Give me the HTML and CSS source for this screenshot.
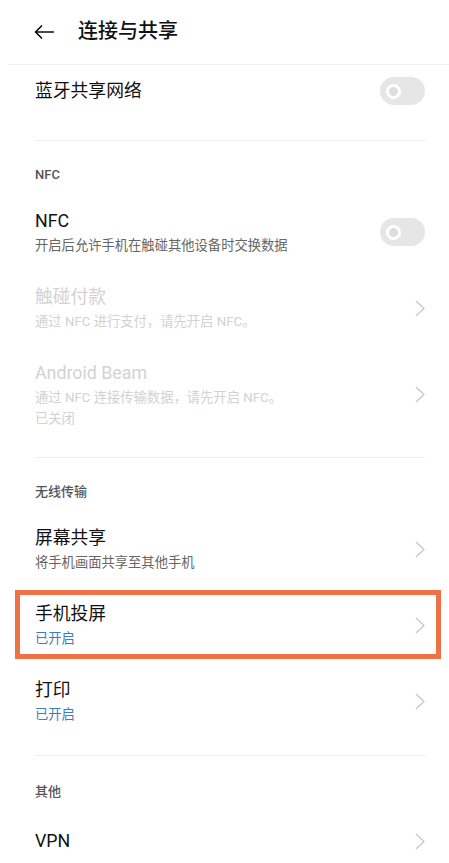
FILE: index.html
```html
<!DOCTYPE html>
<html lang="zh-CN">
<head>
  <meta charset="UTF-8" />
  <title>连接与共享</title>
  <link rel="stylesheet" href="styles.css">
</head>
<body>

  <!-- 顶部标题栏 -->
  <div class="top-bar">
    <svg class="back-icon" width="20" height="14" viewBox="0 0 20 14">
      <path d="M19.5 7H1.5M7.5 1L1.5 7l6 6" fill="none" stroke="#111" stroke-width="1.7" stroke-linecap="round" stroke-linejoin="round"/>
    </svg>
    <h1 class="page-title">连接与共享</h1>
  </div>

  <div class="settings">
    <div class="group first-group">
      <div class="item single">
        <div class="item-text">
          <div class="item-title">蓝牙共享网络</div>
        </div>
        <div class="switch"><span class="knob"></span></div>
      </div>
    </div>

    <div class="group">
      <div class="group-label">NFC</div>
      <div class="item">
        <div class="item-text">
          <div class="item-title">NFC</div>
          <div class="item-sub">开启后允许手机在触碰其他设备时交换数据</div>
        </div>
        <div class="switch"><span class="knob"></span></div>
      </div>
      <div class="item disabled">
        <div class="item-text">
          <div class="item-title">触碰付款</div>
          <div class="item-sub">通过 NFC 进行支付，请先开启 NFC。</div>
        </div>
        <svg class="chevron" width="10" height="17" viewBox="0 0 10 17"><polyline points="1,1 9,8.5 1,16" /></svg>
      </div>
      <div class="item disabled">
        <div class="item-text">
          <div class="item-title">Android Beam</div>
          <div class="item-sub">通过 NFC 连接传输数据，请先开启 NFC。</div>
          <div class="item-sub">已关闭</div>
        </div>
        <svg class="chevron" width="10" height="17" viewBox="0 0 10 17"><polyline points="1,1 9,8.5 1,16" /></svg>
      </div>
    </div>

    <div class="group wireless">
      <div class="group-label">无线传输</div>
      <div class="item">
        <div class="item-text">
          <div class="item-title">屏幕共享</div>
          <div class="item-sub">将手机画面共享至其他手机</div>
        </div>
        <svg class="chevron" width="10" height="17" viewBox="0 0 10 17"><polyline points="1,1 9,8.5 1,16" /></svg>
      </div>
      <div class="item highlight">
        <div class="item-text">
          <div class="item-title">手机投屏</div>
          <div class="item-sub on">已开启</div>
        </div>
        <svg class="chevron" width="10" height="17" viewBox="0 0 10 17"><polyline points="1,1 9,8.5 1,16" /></svg>
      </div>
      <div class="item">
        <div class="item-text">
          <div class="item-title">打印</div>
          <div class="item-sub on">已开启</div>
        </div>
        <svg class="chevron" width="10" height="17" viewBox="0 0 10 17"><polyline points="1,1 9,8.5 1,16" /></svg>
      </div>
    </div>

    <div class="group last-group">
      <div class="group-label">其他</div>
      <div class="item single vpn">
        <div class="item-text">
          <div class="item-title">VPN</div>
        </div>
        <svg class="chevron" width="10" height="17" viewBox="0 0 10 17"><polyline points="1,1 9,8.5 1,16" /></svg>
      </div>
    </div>
  </div>

</body>
</html>
```

FILE: styles.css
```css
* {
  box-sizing: border-box;
}
body {
  font-family: Roboto, "Noto Sans CJK SC", sans-serif;
  margin: 0;
  padding: 0;
  background-color: #ffffff;
  color: #111;
  overflow: hidden;
}
.top-bar {
  display: flex;
  align-items: center;
  height: 65px;
  margin-left: 8px;
  padding-left: 26px;
  border-bottom: 1px solid #f0f0f0;
}
.back-icon {
  margin-right: 24px;
  flex-shrink: 0;
}
.page-title {
  margin: 0;
  font-size: 20px;
  font-weight: 500;
  line-height: 28px;
  color: #111;
  position: relative;
  top: -1px;
}
.settings {
  padding: 0 24px 0 35px;
}
.group {
  padding-bottom: 14px;
  border-bottom: 1px solid #eeeeee;
}
.first-group {
  padding-bottom: 23px;
}
.wireless {
  padding-bottom: 16px;
}
.last-group {
  border-bottom: none;
}
.group-label {
  padding: 26px 0 11px;
  font-size: 13px;
  line-height: 16px;
  height: 53px;
  font-weight: 500;
  color: #555;
}
.last-group .group-label {
  padding-top: 28px;
  height: 55px;
}
.item {
  display: flex;
  align-items: center;
  justify-content: space-between;
  padding: 14px 0;
  position: relative;
}
.item.single {
  padding: 12px 0;
}
.item.vpn {
  padding: 17px 0 12px;
}
.item-title {
  font-size: 17.8px;
  line-height: 26px;
  height: 26px;
  color: #111;
}
.item-sub {
  font-size: 13.3px;
  line-height: 21px;
  height: 21px;
  color: #666;
}
.item-title + .item-sub {
  margin-top: 1px;
}
.item-sub.on {
  color: #3d7bc7;
}
.disabled .item-title,
.disabled .item-sub {
  color: #d2d2d2;
}
.chevron {
  flex-shrink: 0;
  fill: none;
  stroke: #c8c8c8;
  stroke-width: 1.3;
}
.switch {
  flex-shrink: 0;
  width: 45px;
  height: 28px;
  border-radius: 14px;
  background-color: #e6e6e6;
  display: flex;
  align-items: center;
  padding-left: 6px;
}
.knob {
  width: 15px;
  height: 15px;
  border-radius: 50%;
  border: 3.5px solid #ffffff;
  background-color: #dedede;
}
/* 标注框 */
.highlight::after {
  content: "";
  position: absolute;
  left: -20px;
  right: -16px;
  top: 3px;
  bottom: 4px;
  border: 5px solid #ef7146;
}
```
